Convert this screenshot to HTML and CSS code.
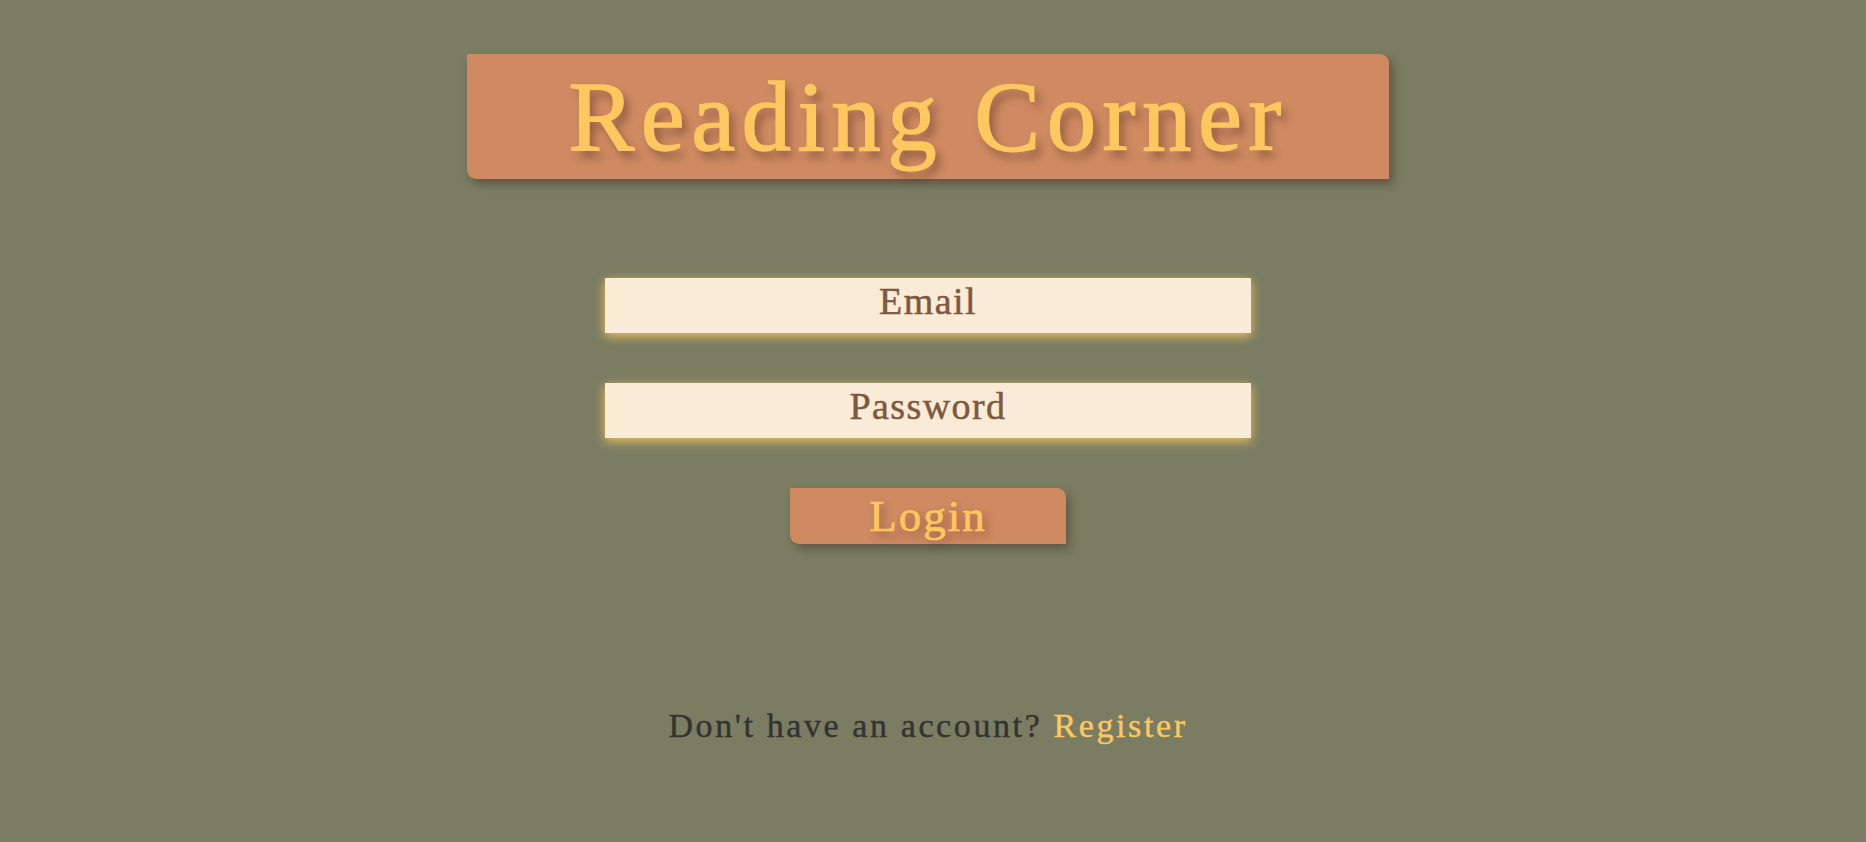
FILE: index.html
```html
<!DOCTYPE html>
<html lang="en">
<head>
<meta charset="utf-8">
<title>Reading Corner</title>
<link rel="stylesheet" href="styles.css">
</head>
<body>
<main class="page">
  <header class="title-box">
    <h1 class="title">Reading Corner</h1>
  </header>
  <form class="login-form">
    <input class="field" type="email" placeholder="Email">
    <input class="field" type="password" placeholder="Password">
    <button class="login-btn" type="button">Login</button>
  </form>
  <p class="footer">Don't have an account? <a class="register" href="#">Register</a></p>
</main>
</body>
</html>
```
FILE: styles.css
```css
html, body {
  margin: 0;
  padding: 0;
  background: #7a7d62;
  height: 100%;
}

body {
  font-family: "Liberation Serif", "Times New Roman", serif;
}

.page {
  display: flex;
  flex-direction: column;
  align-items: center;
  padding: 54px 10px 0 0;
}

.title-box {
  width: 922px;
  height: 125px;
  background: #cf8a61;
  border-radius: 0 9px 0 9px;
  box-shadow: 4px 5px 9px rgba(60, 40, 30, 0.45);
  display: flex;
  justify-content: center;
}

.title {
  margin: 0;
  font-weight: normal;
  font-size: 99px;
  line-height: 125px;
  letter-spacing: 6.4px;
  color: #ffc75f;
  -webkit-text-stroke: 1.4px #ffc75f;
  text-shadow: 5px 7px 9px rgba(70, 40, 30, 0.45);
}

.login-form {
  margin-top: 99px;
  display: flex;
  flex-direction: column;
  align-items: center;
  gap: 50px;
}

.field {
  box-sizing: border-box;
  width: 646px;
  height: 55px;
  padding: 0 0 10px;
  border: none;
  outline: none;
  background: #faebd7;
  box-shadow: 0 3px 10px #f3c060;
  font-family: "Liberation Serif", "Times New Roman", serif;
  font-size: 38px;
  letter-spacing: 1.4px;
  text-align: center;
  color: #7c5940;
  -webkit-text-stroke: 0.5px #7c5940;
}

.field::placeholder {
  color: #7c5940;
  opacity: 1;
}

.login-btn {
  box-sizing: border-box;
  width: 276px;
  height: 56px;
  padding: 0;
  border: none;
  background: #cf8a61;
  border-radius: 0 9px 0 9px;
  box-shadow: 4px 5px 8px rgba(60, 40, 30, 0.4);
  font-family: "Liberation Serif", "Times New Roman", serif;
  font-size: 45px;
  line-height: 56px;
  letter-spacing: 2px;
  color: #ffc75f;
  -webkit-text-stroke: 0.7px #ffc75f;
  text-shadow: 4px 5px 10px rgba(70, 40, 30, 0.45);
  cursor: pointer;
}

.footer {
  margin: 162px 0 0;
  font-size: 34px;
  line-height: 39px;
  letter-spacing: 2.6px;
  color: #333331;
  -webkit-text-stroke: 0.4px #333331;
}

.register {
  color: #ffc75f;
  -webkit-text-stroke: 0.4px #ffc75f;
  text-decoration: none;
}
```
